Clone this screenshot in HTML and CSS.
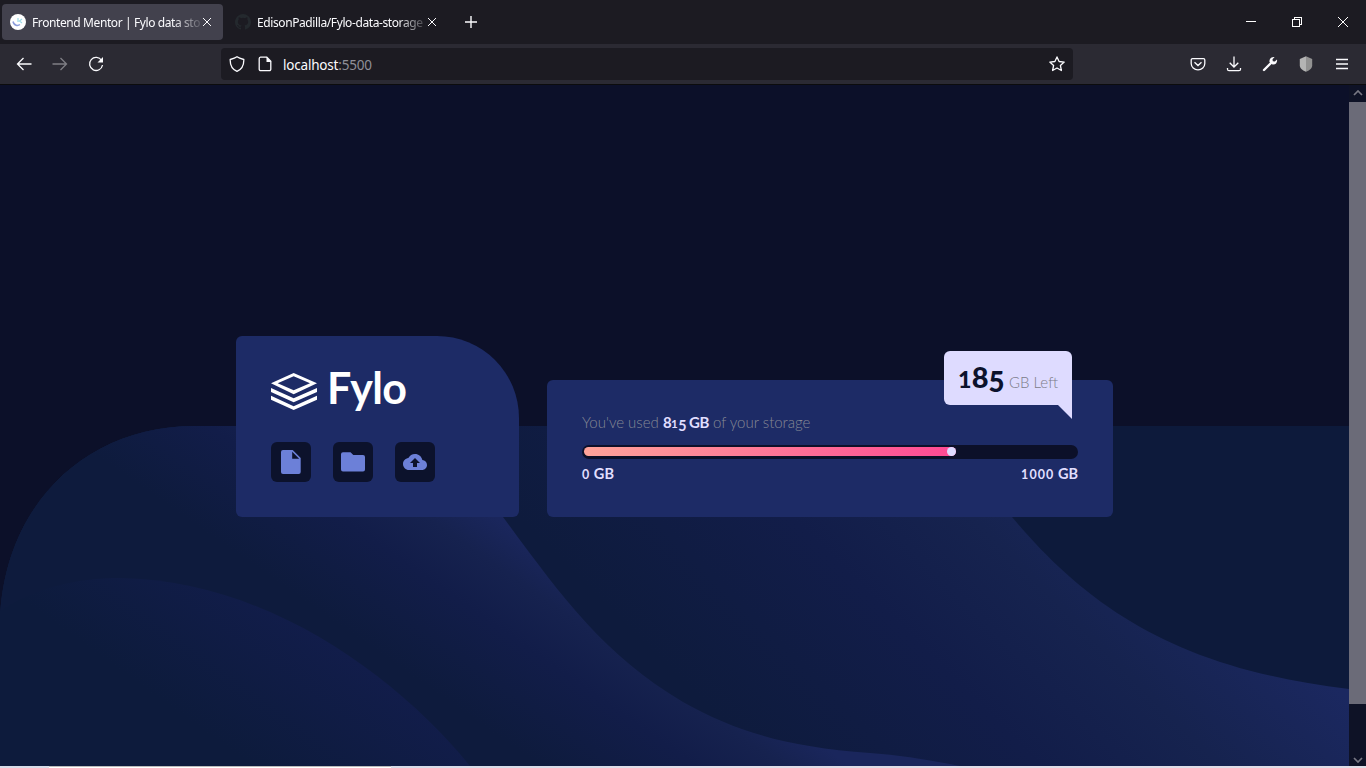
FILE: index.html
```html
<!DOCTYPE html>
<html lang="en">
<head>
<meta charset="utf-8">
<title>Frontend Mentor | Fylo data storage component</title>
<link rel="stylesheet" href="styles.css">
</head>
<body>
<header class="tabs">
  <div class="tab tab-active">
    <svg class="favicon" viewBox="0 0 16 16"><circle cx="8" cy="8" r="8" fill="#fff"/><path d="M3 7.500C4 12 8 12 10 10.500" fill="none" stroke="#8b9cdb" stroke-width="1.500"/><path d="M8 4v4M12 5L9.500 7 12 9" fill="none" stroke="#9edbe8" stroke-width="1.200"/></svg>
    <span class="tab-title title-one">Frontend Mentor | Fylo data sto</span>
    <svg class="close" viewBox="0 0 10 10"><path d="M1 1l8 8M9 1L1 9"/></svg>
  </div>
  <div class="tab">
    <svg class="favicon" viewBox="0 0 16 16"><path fill="#24292e" d="M8 0a8 8 0 0 0-2.530 15.590c.4.070.550-.170.550-.380v-1.490c-2.010.370-2.530-.490-2.690-.940-.090-.230-.480-.940-.820-1.130-.280-.150-.680-.520-.010-.530.630-.010 1.080.580 1.230.820.720 1.210 1.870.870 2.330.660.070-.520.280-.870.510-1.070-1.780-.2-3.640-.890-3.640-3.950 0-.870.310-1.590.820-2.150-.080-.2-.360-1.020.080-2.120 0 0 .670-.210 2.200.820a7.400 7.400 0 0 1 4 0c1.530-1.040 2.200-.820 2.200-.820.440 1.100.160 1.920.080 2.120.510.560.820 1.270.820 2.150 0 3.070-1.870 3.750-3.650 3.950.290.250.540.730.540 1.480v2.200c0 .210.150.460.550.380A8 8 0 0 0 8 0z"/></svg>
    <span class="tab-title title-two">EdisonPadilla/Fylo-data-storage</span>
    <svg class="close" viewBox="0 0 10 10"><path d="M1 1l8 8M9 1L1 9"/></svg>
  </div>
  <svg class="plus" viewBox="0 0 12 12"><path d="M6 0v12M0 6h12"/></svg>
  <div class="window-controls">
    <svg viewBox="0 0 10 10" shape-rendering="crispEdges"><path d="M0 4.500h10"/></svg>
    <svg viewBox="0 0 10 10" shape-rendering="crispEdges"><path d="M.5 2.500h7v7h-7zM2.500 2.500v-2h7v7h-2"/></svg>
    <svg viewBox="0 0 10 10"><path d="M0 0l10 10M10 0L0 10"/></svg>
  </div>
</header>
<nav class="toolbar">
  <div class="nav-buttons">
    <svg viewBox="0 0 16 16"><path d="M15.500 8H1.500M7.500 2L1.500 8l6 6"/></svg>
    <svg class="disabled" viewBox="0 0 16 16"><path d="M.5 8h14M8.500 2l6 6-6 6"/></svg>
    <svg viewBox="0 0 16 16"><path d="M13.600 4.500A6.500 6.500 0 1 0 14.500 9"/><path d="M15 1v5.500H9.500z" fill="#fbfbfe" stroke="none"/></svg>
  </div>
  <div class="url-bar">
    <svg viewBox="0 0 16 16"><path d="M8 .8c2 1.500 4 2 6.800 2.700C15 9 12.500 13.500 8 15.400 3.500 13.500 1 9 1.200 3.500 4 2.800 6 2.300 8 .8z"/></svg>
    <svg class="page-icon" viewBox="0 0 16 16"><path d="M3.500 1.200h6.300l4 4v8a1.500 1.500 0 0 1-1.500 1.500H3.700a1.500 1.500 0 0 1-1.500-1.500V2.700a1.500 1.500 0 0 1 1.300-1.500z"/><path d="M9.500 1v5h4.800z" fill="#fbfbfe" stroke="none"/></svg>
    <span class="url">localhost<span class="port">:5500</span></span>
    <svg class="star" viewBox="0 0 16 16"><path stroke-linejoin="round" d="M8 .9l2.100 4.600 5.100.6-3.800 3.400 1 5L8 12l-4.400 2.500 1-5L.8 6.100l5.100-.6z"/></svg>
  </div>
  <div class="tools">
    <svg viewBox="0 0 16 16"><path d="M2.500 2.700h11a1.300 1.300 0 0 1 1.300 1.300v3.500a6.800 6.300 0 0 1-13.600 0V4a1.300 1.300 0 0 1 1.300-1.300zM4.500 6.300L8 9.500l3.500-3.200"/></svg>
    <svg viewBox="0 0 16 16"><path d="M8 .5v10.300M3.700 6.700L8 11l4.300-4.300M1.500 12v1.200c0 1 .5 1.500 1.500 1.500h10c1 0 1.500-.5 1.500-1.500V12"/></svg>
    <svg viewBox="0 0 16 16"><path d="M2 14L9 7" stroke-width="2.600" stroke-linecap="round"/><path stroke="none" fill="#fbfbfe" d="M12.600 1L10.500 3.200l.3 2 2 .4L15 3.500c.6 3.200-1.500 5.500-4.500 5L7.500 6C7 3 9.300.5 12.600 1z"/></svg>
    <svg class="shield" viewBox="0 0 16 16"><path stroke="none" fill="#b4b4b4" d="M8 .3L1.800 3v6.500c0 3 3 5 6.200 6.300z"/><path stroke="none" fill="#929292" d="M8 .3L14.200 3v6.500c0 3-3 5-6.200 6.300z"/></svg>
    <svg viewBox="0 0 16 16"><path d="M2 3.500h12M2 8h12M2 12.500h12"/></svg>
  </div>
</nav>
<div class="viewport">
  <main class="page">
    <svg class="waves" viewBox="0 85 1349 681">
      <defs>
        <linearGradient id="right" gradientUnits="userSpaceOnUse" x1="700" y1="700" x2="1025" y2="375"><stop offset="0" stop-color="#0e1b3d"/><stop offset=".42" stop-color="#121d49"/><stop offset=".7" stop-color="#16234f"/><stop offset="1" stop-color="#1b2860"/></linearGradient>
        <linearGradient id="middle" gradientUnits="userSpaceOnUse" x1="300" y1="598" x2="402" y2="452"><stop offset="0" stop-color="#0e1b3d"/><stop offset=".5" stop-color="#121d49"/><stop offset=".78" stop-color="#16224f"/><stop offset="1" stop-color="#1a265c"/></linearGradient>
        <linearGradient id="left" gradientUnits="userSpaceOnUse" x1="140" y1="685" x2="230" y2="560"><stop offset="0" stop-color="#0d1b3c"/><stop offset="1" stop-color="#121d4b"/></linearGradient>
      </defs>
      <path fill="#0d1a3b" d="M0 766V618C5 505 85 426 195 426H1349V766z"/>
      <path fill="url(#right)" d="M0 766V618C5 505 85 426 195 426H938C980 480 1000 504 1012 517C1090 610 1180 669 1349 689V766z"/>
      <path fill="url(#middle)" d="M0 766V618C5 505 85 426 195 426H400C440 446 475 480 503 517C560 594 602 654 683 702C735 731 785 747 870 753C900 755 930 760 960 766z"/>
      <path fill="url(#left)" d="M0 766V611C35 588 75 578 120 578C270 580 400 680 470 766z"/>
    </svg>
    <section class="component">
      <div class="brand-card">
        <div class="logo">
          <svg viewBox="123 129 138 111"><path fill="#fff" fill-rule="evenodd" d="M123 160L191 129 261 160 191 193zM143 160L191 181 240 160 191 139zM123 174L191 205 261 174V186L191 217 123 186zM123 197L191 229 261 197V209L191 240 123 209z"/></svg>
          <span>Fylo</span>
        </div>
        <div class="actions">
          <button class="action" aria-label="Document"><svg viewBox="0 0 24 24"><path d="M4 0h9.700l8 8v14a2 2 0 0 1-2 2H4a2 2 0 0 1-2-2V2a2 2 0 0 1 2-2z"/><path fill="#0c122c" d="M13.200 1.700V8.700H20.200z"/></svg></button>
          <button class="action" aria-label="Folder"><svg viewBox="0 0 24 24"><path d="M2 2.200h7.500l2.800 2.800H22a2 2 0 0 1 2 2v12.500a2 2 0 0 1-2 2H2a2 2 0 0 1-2-2V4.200a2 2 0 0 1 2-2z"/></svg></button>
          <button class="action" aria-label="Upload"><svg viewBox="0 0 24 24"><path d="M19.350 10.040C18.670 6.590 15.640 4 12 4 9.110 4 6.600 5.640 5.350 8.040 2.340 8.360 0 10.910 0 14c0 3.310 2.690 6 6 6h13c2.760 0 5-2.240 5-5 0-2.640-2.050-4.780-4.650-4.960zM14 13v4h-4v-4H7l5-5 5 5h-3z"/></svg></button>
        </div>
      </div>
      <div class="storage-card">
        <p class="usage">You've used <b>8<span class="low">1</span><span class="drop">5</span> GB</b> of your storage</p>
        <div class="track"><div class="fill" style="width:75.6%"><i class="knob"></i></div></div>
        <div class="limits"><b><span class="low">0</span> GB</b><b><span class="low">1000</span> GB</b></div>
        <div class="tooltip"><span class="amount"><span class="low">1</span>8<span class="drop">5</span></span><span class="left-label">GB Left</span></div>
      </div>
    </section>
  </main>
  <aside class="scrollbar">
    <svg viewBox="0 0 10 6"><path d="M1 5l4-4 4 4"/></svg>
    <div class="thumb"></div>
    <svg class="down" viewBox="0 0 10 6"><path d="M1 1l4 4 4-4"/></svg>
  </aside>
</div>
<footer class="taskbar"><div class="search"></div></footer>
</body>
</html>
```
FILE: styles.css
```css
* { box-sizing: border-box; }
body {
  margin: 0;
  width: 1366px;
  height: 768px;
  overflow: hidden;
  display: flex;
  flex-direction: column;
  background: #0c1029;
  font-family: "Noto Sans", sans-serif;
}
svg { display: block; flex: none; }
.tabs {
  height: 44px;
  flex: none;
  display: flex;
  align-items: center;
  background: #1c1b22;
  padding: 0 17px 0 2px;
}
.tab {
  width: 221px;
  height: 36px;
  display: flex;
  align-items: center;
  padding-left: 8px;
  border-radius: 4px;
  color: #fbfbfe;
  margin-right: 4px;
}
.tab-active { background: #42414d; }
.favicon { width: 16px; height: 16px; margin-right: 6px; }
.tab-title {
  width: 169px;
  white-space: nowrap;
  font-size: 12px;
  line-height: 18px;
  padding-top: 1px;
  -webkit-mask-image: linear-gradient(90deg, #000 140px, transparent 173px);
  mask-image: linear-gradient(90deg, #000 140px, transparent 173px);
}
.title-one { letter-spacing: -.4px; }
.title-two { letter-spacing: -.4px; }
.close { width: 10px; height: 10px; margin-left: 1px; }
.close path, .plus path { stroke: #fbfbfe; stroke-width: 1; fill: none; }
.plus path { stroke-width: 1.4; }
.plus { width: 12px; height: 12px; margin-left: 13px; }
.window-controls { display: flex; gap: 36px; margin-left: auto; margin-right: 1px; }
.window-controls svg { width: 10px; height: 10px; }
.window-controls path { fill: none; stroke: #fff; }
.toolbar {
  height: 41px;
  flex: none;
  display: flex;
  align-items: center;
  background: #2b2a33;
  border-bottom: 1px solid #0c0c0d;
}
.toolbar svg { width: 16px; height: 16px; }
.toolbar path { fill: none; stroke: #fbfbfe; stroke-width: 1.3; }
.toolbar path[stroke="none"] { fill: #fbfbfe; stroke: none; }
.toolbar .shield path:first-child { fill: #b4b4b4; }
.toolbar .shield path:last-child { fill: #929292; }
.toolbar path[stroke-linecap] { stroke-width: 2.4; }
.nav-buttons { width: 221px; padding-left: 16px; display: flex; gap: 20px; }
.disabled { opacity: .4; }
.url-bar {
  width: 852px;
  height: 32px;
  display: flex;
  align-items: center;
  padding: 0 8px;
  border-radius: 4px;
  background: #1c1b22;
}
.page-icon { margin-left: 12px; }
.url { margin: 2px 0 0 10px; font-size: 13.5px; letter-spacing: -.2px; color: #fbfbfe; }
.port { color: #8f8f98; }
.star { margin-left: auto; }
.tools { margin-left: auto; margin-right: 16px; display: flex; gap: 20px; }
.viewport { height: 681px; flex: none; display: flex; }
.page {
  position: relative;
  width: 1349px;
  background: #0c1029;
  padding: 251px 236px 0;
  font-family: Lato, sans-serif;
}
.waves { position: absolute; inset: 0; width: 1349px; height: 681px; }
.component { position: relative; display: flex; align-items: flex-end; gap: 28px; }
.brand-card {
  width: 283px;
  height: 181px;
  padding: 32px 35px;
  border-radius: 6px 82px 6px 6px;
  background: #1d2b66;
}
.logo { height: 46px; display: flex; align-items: center; gap: 10px; }
.logo svg { width: 46px; height: 37px; }
.logo span { color: #fff; font-size: 43px; line-height: 46px; font-weight: 700; letter-spacing: -.6px; margin-top: -6px; }
.actions { display: flex; gap: 22px; margin-top: 28px; }
.action {
  width: 40px;
  height: 40px;
  border: 0;
  padding: 8px;
  border-radius: 6px;
  background: #0c122c;
}
.action svg { width: 24px; height: 24px; }
.action path { fill: #6c80d8; }
.action path[fill] { fill: #0c122c; }
.storage-card {
  position: relative;
  width: 566px;
  height: 137px;
  padding: 32px 35px 0;
  border-radius: 6px;
  background: #1d2b66;
}
.usage { margin: 0; height: 20px; font-size: 15px; line-height: 20px; font-weight: 300; color: #858894; white-space: nowrap; }
.usage b, .limits b { color: #e1dfff; font-weight: 700; }
.usage b { letter-spacing: -.5px; }
.low { font-size: .78em; letter-spacing: .3px; }
.limits .low { font-size: .86em; letter-spacing: 1.1px; }
.drop { position: relative; top: .18em; font-size: .95em; }
.track { height: 14px; margin-top: 13px; padding: 2px; border-radius: 7px; background: #0c1029; }
.fill {
  height: 9px;
  display: flex;
  justify-content: flex-end;
  border-radius: 5px;
  background: linear-gradient(90deg, #ffa399, #ff4994);
}
.knob { width: 9px; height: 9px; border-radius: 50%; background: #dedbff; }
.limits { display: flex; justify-content: space-between; margin-top: 5px; font-size: 14.5px; line-height: 20px; }
.tooltip {
  position: absolute;
  right: 41px;
  top: -29px;
  width: 128px;
  height: 54px;
  display: flex;
  align-items: baseline;
  padding: 9px 14px 0;
  border-radius: 6px 6px 0 6px;
  background: #dedbff;
  white-space: nowrap;
}
.tooltip::after {
  content: "";
  position: absolute;
  right: 0;
  top: 54px;
  width: 14px;
  height: 14px;
  background: #dedbff;
  clip-path: polygon(0 0, 100% 0, 100% 100%);
}
.amount { font-size: 29px; line-height: 34px; font-weight: 900; color: #0c122c; width: 51px; }
.amount .low { font-size: .8em; }
.amount .drop { top: .14em; }
.left-label { font-size: 15px; font-weight: 300; color: #7c7c88; }
.scrollbar {
  width: 17px;
  display: flex;
  flex-direction: column;
  align-items: center;
  padding: 5px 0 3px;
  background: #0e1226;
}
.scrollbar svg { width: 10px; height: 6px; }
.scrollbar path { fill: none; stroke: #777783; stroke-width: 1.7; }
.thumb { width: 17px; height: 602px; margin-top: 6px; background: #6b6b78; }
.down { margin-top: auto; }
.taskbar { height: 2px; flex: none; background: linear-gradient(90deg, #d8dce8 610px, #dfdde7 610px); }
.search { width: 342px; height: 2px; margin-left: 49px; background: #fff; border-top: 1px solid #bbb; }
```
